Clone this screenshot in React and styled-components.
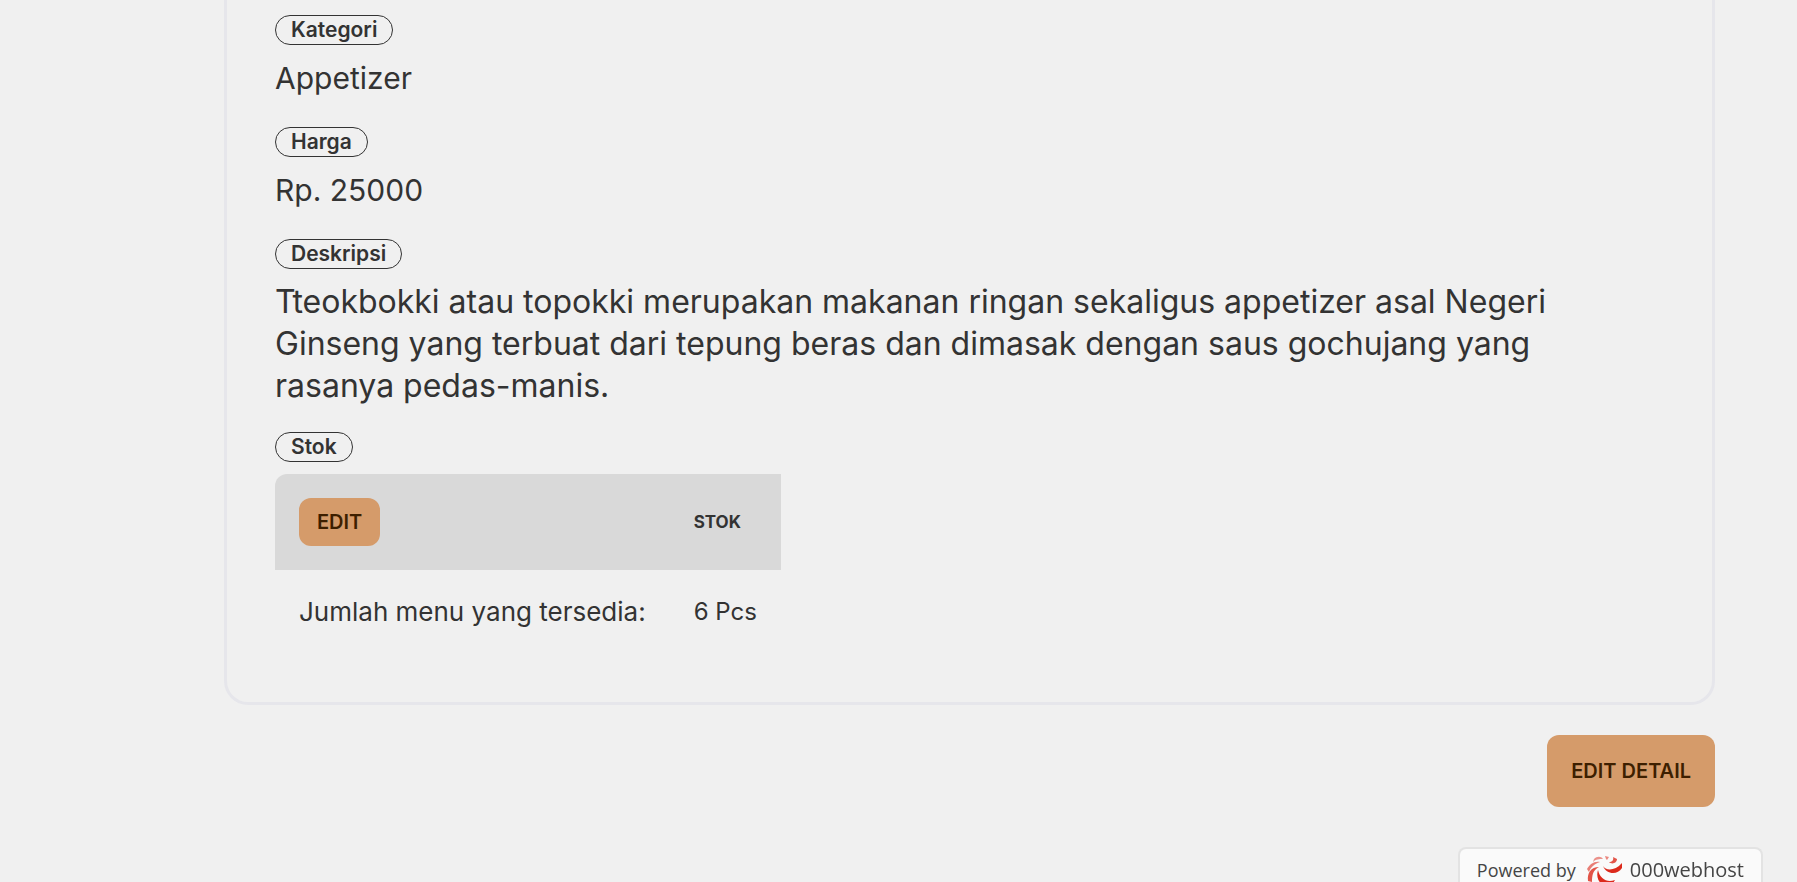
import React from "react";
import styled, { createGlobalStyle } from "styled-components";

const GlobalStyle = createGlobalStyle`
  *, *::before, *::after { box-sizing: border-box; }
  body {
    margin: 0;
    background: #f0f0f0;
    color: #333333;
    font-family: Inter, "Open Sans", sans-serif;
  }
`;

const Page = styled.main`
  display: flex;
  flex-direction: column;
  align-items: flex-end;
  gap: 30px;
  min-height: 100vh;
  padding: 0 82px 48px 224px;
`;

const Card = styled.section`
  align-self: stretch;
  padding: 15px 48px 48px;
  border: 3px solid #e6e6eb;
  border-top: 0;
  border-radius: 0 0 24px 24px;
`;

const Fields = styled.dl`
  display: flex;
  flex-direction: column;
  gap: 25px;
  margin: 0;
`;

const Field = styled.div`
  display: flex;
  flex-direction: column;
  align-items: flex-start;
  gap: 12px;
`;

const Label = styled.dt`
  padding: 0 15px;
  border: 1px solid #333333;
  border-radius: 15px;
  font-size: 21px;
  font-weight: 600;
  line-height: 28px;
`;

const Value = styled.dd`
  min-height: 45px;
  margin: 0;
  padding-right: 24px;
  font-size: ${({ $long }) => ($long ? 32 : 30)}px;
  line-height: 42px;
`;

const StockValue = styled.dd`
  margin: 0;
`;

const Button = styled.button`
  height: ${({ $large }) => ($large ? 72 : 48)}px;
  padding: 0 ${({ $large }) => ($large ? 24 : 18)}px;
  border: 0;
  border-radius: 12px;
  background: #d59b6a;
  color: #3d1f00;
  font: inherit;
  font-size: 20px;
  font-weight: 600;
  line-height: 30px;
  cursor: pointer;
`;

const StockTable = styled.table`
  border-collapse: collapse;
  text-align: left;
`;

const HeadCell = styled.th`
  padding: 24px;
  background: #d9d9d9;
  font-size: 17px;
  font-weight: 700;
  line-height: 24px;

  &:first-child { border-top-left-radius: 12px; }
`;

const Cell = styled.td`
  padding: 24px;
  font-size: ${({ $caption }) => ($caption ? 26 : 24)}px;
  line-height: 36px;
  white-space: nowrap;
`;

const HostBadge = styled.a`
  position: fixed;
  right: 34px;
  bottom: 0;
  display: flex;
  align-items: center;
  height: 35px;
  padding: 8px 17px 0;
  border: 2px solid #e3e3e3;
  border-bottom: 0;
  border-radius: 8px 8px 0 0;
  background: #fafafa;
  color: #454545;
  font-family: "Open Sans", "Noto Sans", sans-serif;
  font-size: 18px;
  line-height: 28px;
  text-decoration: none;
  white-space: nowrap;
`;

const HostName = styled.span`
  font-size: 20px;
  font-weight: 500;
`;

const HostLogo = styled.svg`
  width: 36px;
  height: 28px;
  margin: 0 7px 0 11px;
`;

const fields = [
  { label: "Kategori", value: "Appetizer" },
  { label: "Harga", value: "Rp. 25000" },
  {
    label: "Deskripsi",
    long: true,
    value:
      "Tteokbokki atau topokki merupakan makanan ringan sekaligus appetizer asal Negeri Ginseng yang terbuat dari tepung beras dan dimasak dengan saus gochujang yang rasanya pedas-manis.",
  },
];

export default function App() {
  return (
    <>
      <GlobalStyle />
      <Page>
        <Card>
          <Fields>
            {fields.map(({ label, value, long }) => (
              <Field key={label}>
                <Label>{label}</Label>
                <Value $long={long}>{value}</Value>
              </Field>
            ))}
            <Field>
              <Label>Stok</Label>
              <StockValue>
                <StockTable>
                  <thead>
                    <tr>
                      <HeadCell><Button type="button">EDIT</Button></HeadCell>
                      <HeadCell scope="col">STOK</HeadCell>
                    </tr>
                  </thead>
                  <tbody>
                    <tr>
                      <Cell $caption>Jumlah menu yang tersedia:</Cell>
                      <Cell>6 Pcs</Cell>
                    </tr>
                  </tbody>
                </StockTable>
              </StockValue>
            </Field>
          </Fields>
        </Card>
        <Button type="button" $large>EDIT DETAIL</Button>
      </Page>
      <HostBadge href="#">
        <span>Powered by</span>
        <HostLogo viewBox="0 0 36 28" aria-hidden="true">
          <g fill="#dc2a1c">
            <path d="M11 14C9 20 11 27 17 29H25L28 24C20 27 13 23 11 14Z" />
            <path d="M16 10C19 15 28 15 35 7L35 12C30 20 19 18 16 10Z" />
            <path d="M12 11C6 14 5 19 5 26L1 25C0 17 4 11 12 11Z" opacity=".8" />
            <path d="M13 6C7 8 4 11 2 16L0 13C3 8 7 5 13 6Z" opacity=".6" />
            <path d="M16 3C12 3 9 3 6 6L7 3C10 0 14 0 16 3Z" opacity=".5" />
            <path d="M18 0L22 1L20 4L19 3Z" opacity=".55" />
            <path d="M22 6C25 6 27 4 26 1L30 3C30 7 25 9 22 6Z" opacity=".8" />
          </g>
        </HostLogo>
        <HostName>000webhost</HostName>
      </HostBadge>
    </>
  );
}
